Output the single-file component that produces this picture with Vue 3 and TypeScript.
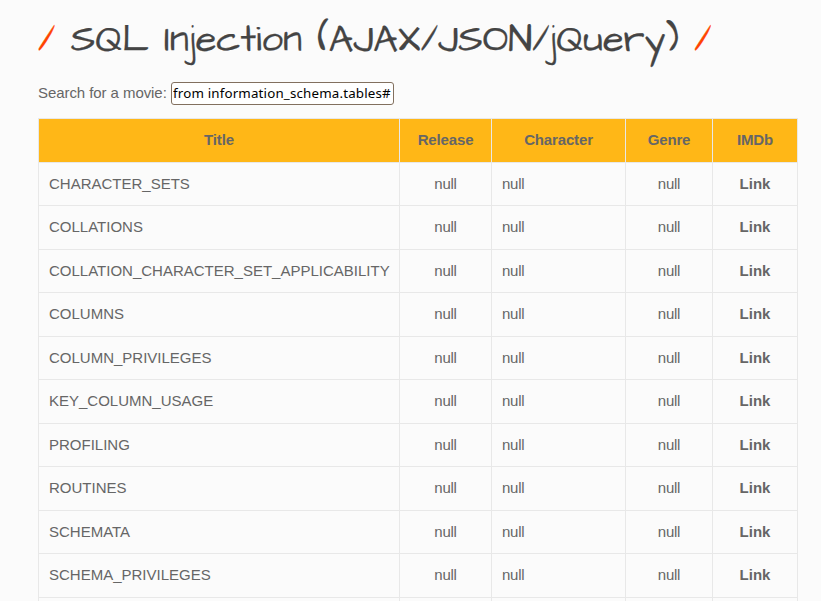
<script setup lang="ts">
import { ref } from 'vue'

interface Movie {
  title: string
  release: string
  character: string
  genre: string
}

const query = ref('from information_schema.tables#')
const headings: string[] = ['Title', 'Release', 'Character', 'Genre', 'IMDb']
const names: string[] = [
  'CHARACTER_SETS',
  'COLLATIONS',
  'COLLATION_CHARACTER_SET_APPLICABILITY',
  'COLUMNS',
  'COLUMN_PRIVILEGES',
  'KEY_COLUMN_USAGE',
  'PROFILING',
  'ROUTINES',
  'SCHEMATA',
  'SCHEMA_PRIVILEGES',
]
const movies: Movie[] = names.map((title) => ({
  title,
  release: 'null',
  character: 'null',
  genre: 'null',
}))
</script>

<template>
  <main class="page">
    <h1 class="heading"><span class="slash">/</span> SQL Injection (AJAX/JSON/jQuery) <span class="slash">/</span></h1>
    <form class="search" @submit.prevent>
      <label for="title">Search for a movie:</label>
      <input id="title" v-model="query" type="text" spellcheck="false" autocomplete="off" />
    </form>
    <div class="table" role="table">
      <div class="row head" role="row">
        <div v-for="h in headings" :key="h" class="cell" role="columnheader">{{ h }}</div>
      </div>
      <div v-for="m in movies" :key="m.title" class="row" role="row">
        <div class="cell left" role="cell">{{ m.title }}</div>
        <div class="cell null" role="cell">{{ m.release }}</div>
        <div class="cell left null" role="cell">{{ m.character }}</div>
        <div class="cell null" role="cell">{{ m.genre }}</div>
        <div class="cell" role="cell"><a class="link">Link</a></div>
      </div>
      <div class="row" role="row">
        <div v-for="h in headings" :key="h" class="cell" role="cell"></div>
      </div>
    </div>
  </main>
</template>

<style>
body {
  background: #fbfbfb;
  overflow: hidden;
}
</style>

<style scoped>
.page {
  box-sizing: border-box;
  height: 601px;
  overflow: hidden;
  padding: 15px 0 0 38px;
  font-family: "Liberation Sans", Arial, sans-serif;
  font-size: 15px;
  color: #666;
}
.heading {
  margin: 0;
  height: 67px;
  font-family: "Architects Daughter", cursive;
  font-size: 38.15px;
  font-weight: 400;
  line-height: 50px;
  color: #444;
  -webkit-text-stroke: 0.25px currentColor;
  white-space: nowrap;
}
.slash {
  color: #ff4400;
}
.search {
  display: flex;
  height: 36px;
  line-height: 22px;
}
.search label {
  width: 133px;
  letter-spacing: -0.07px;
  white-space: nowrap;
}
.search input {
  box-sizing: border-box;
  width: 223px;
  height: 23px;
  padding: 0 1px 2px;
  border: 1px solid #82705f;
  border-radius: 3px;
  outline: none;
  background: #fff;
  color: #000;
  font: 13.33px "Noto Sans", sans-serif;
  letter-spacing: 0.17px;
}
.table {
  width: 760px;
}
.row {
  display: grid;
  grid-template-columns: 361px 92px 134px 87px 86px;
  height: 43.5px;
}
.cell {
  box-sizing: border-box;
  height: 43.5px;
  border-top: 1px solid #e8e8e8;
  border-left: 1px solid #e8e8e8;
  line-height: 42px;
  text-align: center;
}
.cell:last-child {
  border-right: 1px solid #e8e8e8;
}
.left {
  padding-left: 10px;
  text-align: left;
}
.null {
  letter-spacing: -0.25px;
}
.head .cell {
  background: #ffb717;
  font-weight: 700;
  letter-spacing: -0.15px;
}
.link {
  font-weight: 700;
}
</style>
